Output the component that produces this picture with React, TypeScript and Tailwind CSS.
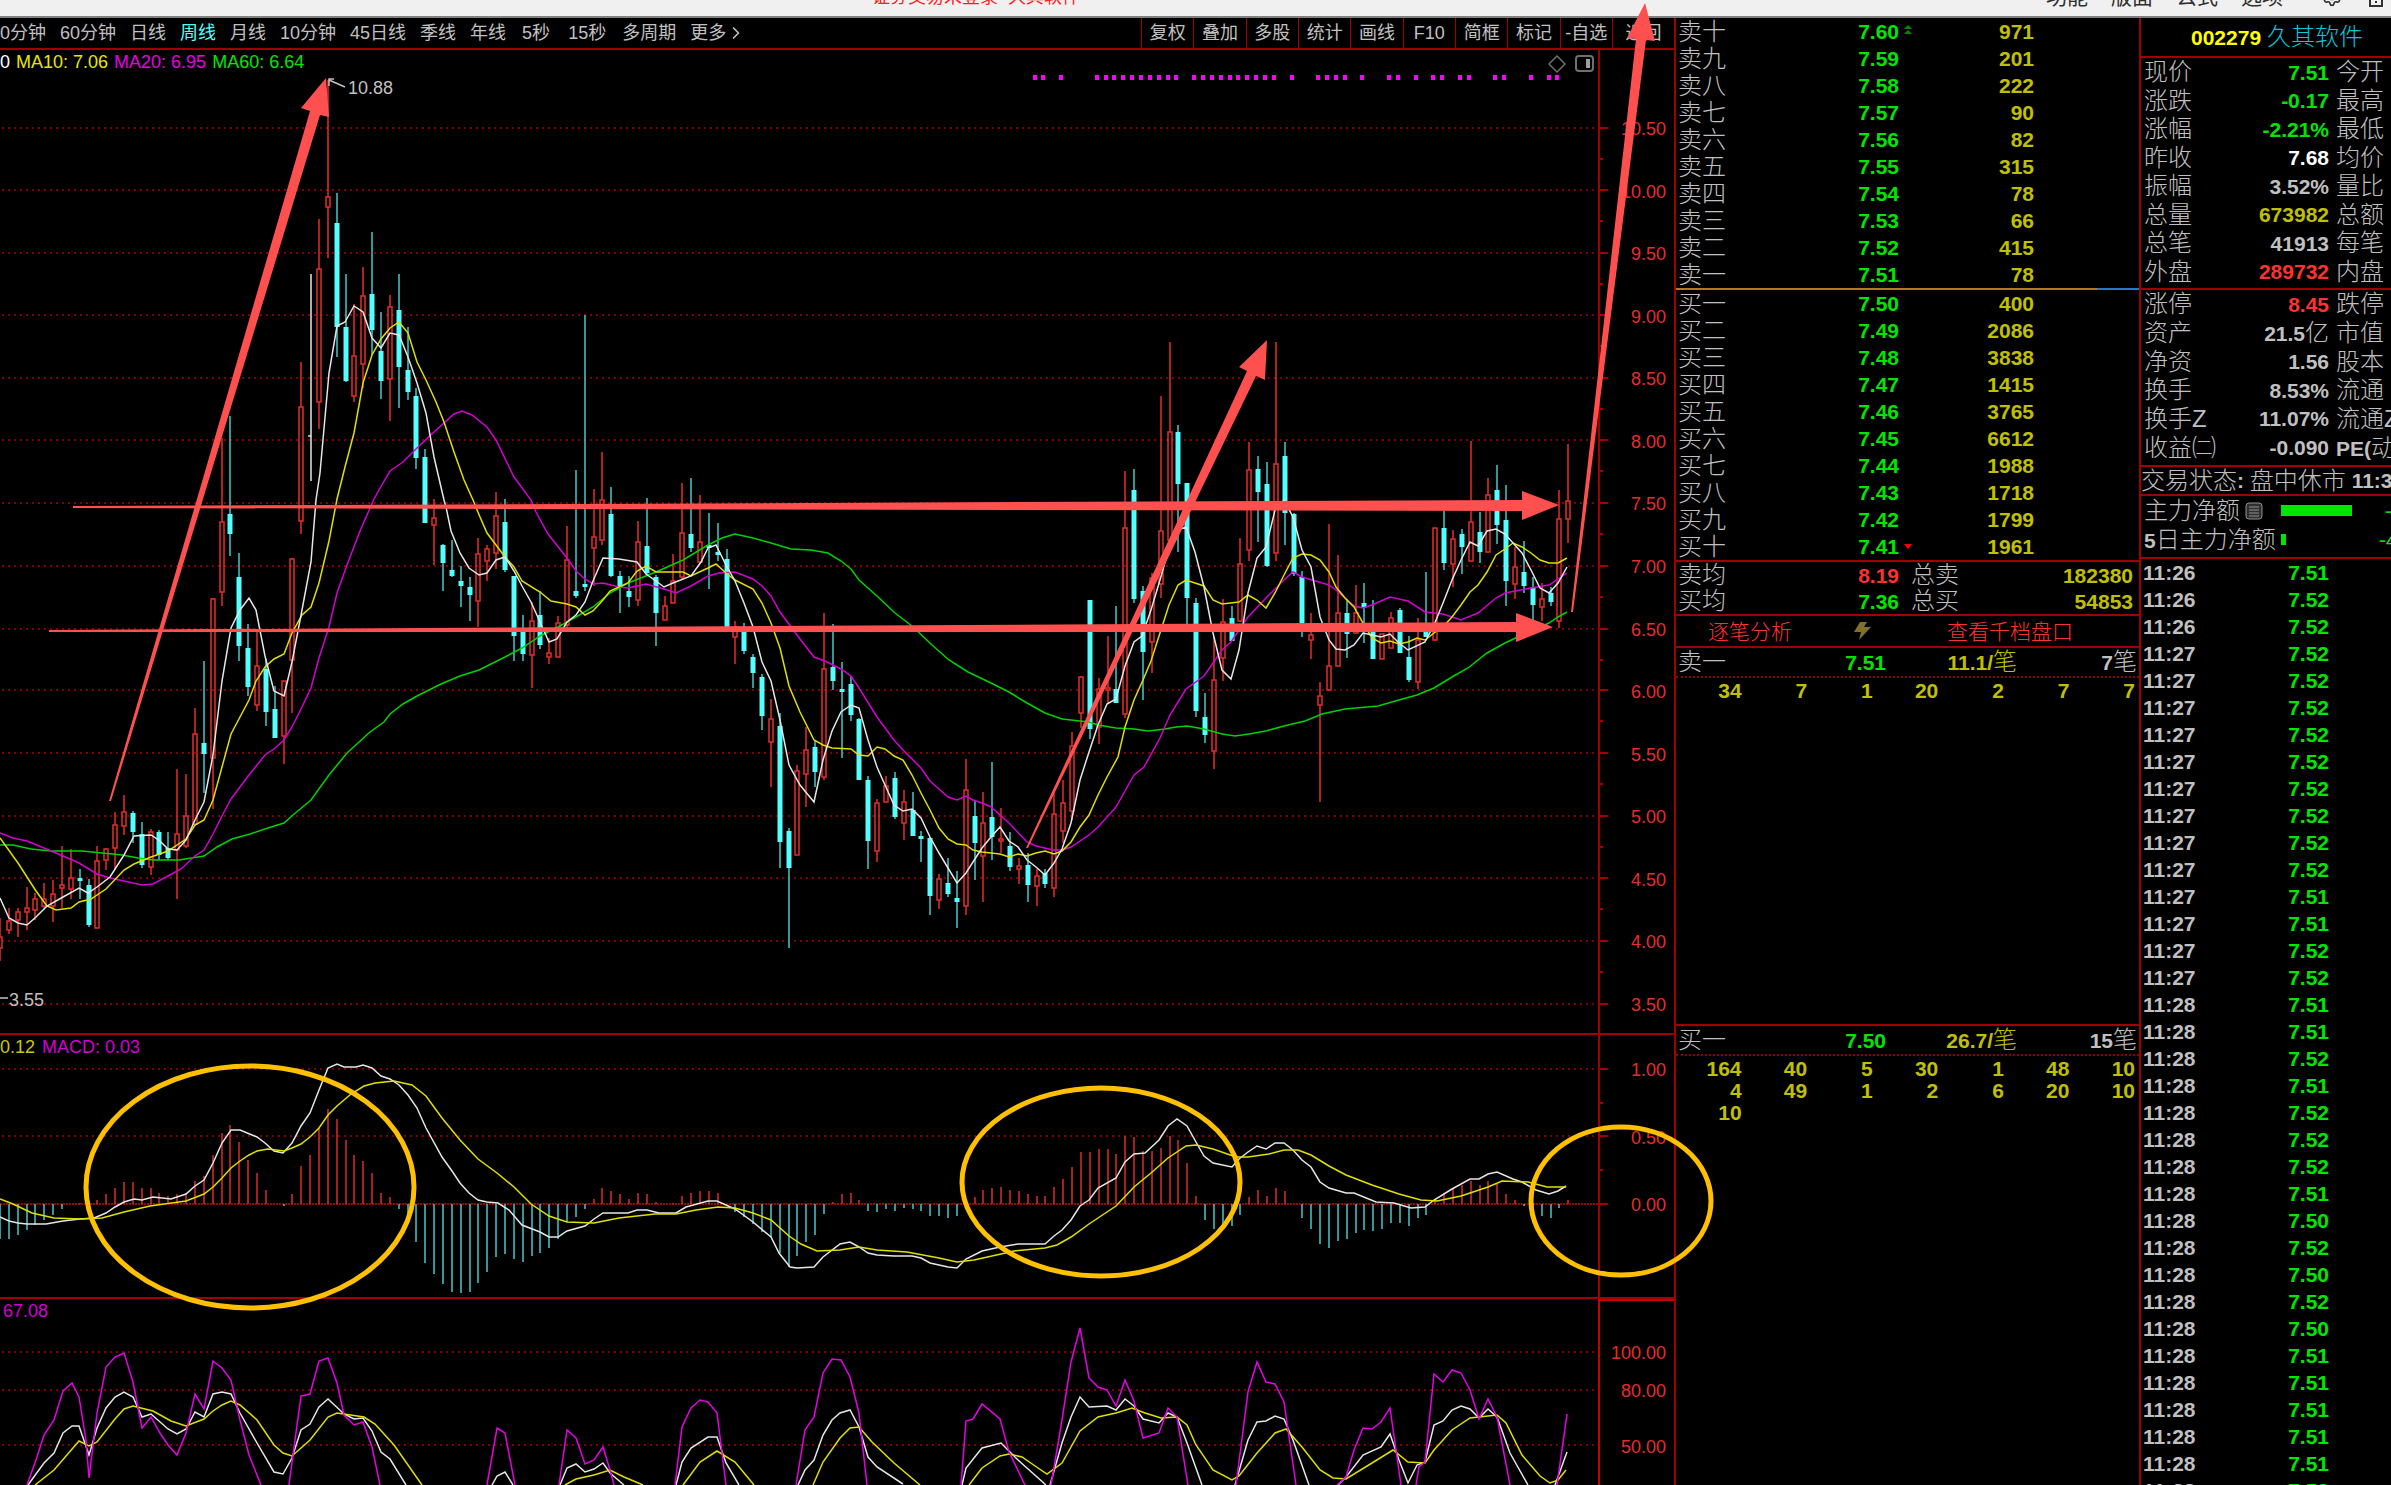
import { ChevronRight, Settings } from "lucide-react";

type Candle = [high: number, top: number, bottom: number, low: number];

// horizontal distance between two bars
const STEP = 8.86;

const RISE: Record<number, Candle> = {
  0: [918, 937, 948, 961],
  1: [908, 921, 930, 934],
  2: [908, 912, 920, 937],
  3: [887, 908, 912, 930],
  4: [893, 899, 910, 920],
  5: [883, 899, 906, 908],
  6: [880, 894, 906, 922],
  7: [846, 885, 888, 908],
  8: [849, 878, 889, 899],
  11: [846, 861, 928, 928],
  12: [848, 849, 860, 870],
  13: [812, 825, 848, 870],
  14: [795, 812, 826, 835],
  17: [829, 832, 867, 875],
  20: [769, 834, 850, 899],
  21: [774, 816, 846, 848],
  22: [708, 734, 824, 826],
  24: [598, 599, 758, 809],
  25: [438, 522, 592, 606],
  29: [631, 666, 705, 711],
  32: [681, 681, 736, 764],
  33: [558, 559, 660, 713],
  34: [362, 407, 521, 534],
  36: [219, 269, 402, 429],
  37: [80, 197, 207, 258],
  40: [304, 356, 396, 402],
  41: [267, 296, 364, 388],
  44: [295, 307, 379, 421],
  49: [499, 518, 525, 565],
  54: [538, 554, 601, 627],
  55: [545, 549, 561, 581],
  56: [492, 516, 553, 569],
  60: [602, 621, 655, 688],
  62: [638, 653, 657, 664],
  63: [616, 623, 657, 657],
  64: [526, 560, 625, 627],
  67: [489, 537, 548, 586],
  68: [452, 500, 540, 545],
  72: [521, 542, 600, 606],
  75: [596, 606, 620, 620],
  76: [554, 581, 603, 603],
  77: [483, 533, 577, 579],
  79: [495, 542, 562, 562],
  83: [621, 627, 637, 664],
  87: [699, 719, 742, 787],
  90: [765, 771, 855, 855],
  91: [727, 750, 774, 807],
  93: [613, 669, 777, 780],
  99: [799, 803, 851, 862],
  100: [776, 786, 802, 802],
  102: [790, 802, 823, 840],
  106: [874, 879, 900, 909],
  109: [759, 790, 906, 915],
  111: [792, 823, 856, 902],
  113: [808, 839, 841, 853],
  115: [858, 866, 869, 884],
  117: [869, 876, 886, 906],
  119: [793, 814, 888, 897],
  120: [780, 803, 831, 843],
  121: [732, 746, 811, 820],
  122: [676, 677, 713, 728],
  124: [678, 689, 727, 744],
  125: [636, 688, 690, 703],
  127: [471, 528, 714, 718],
  130: [573, 578, 642, 673],
  131: [396, 531, 584, 598],
  132: [342, 432, 540, 543],
  137: [637, 680, 751, 769],
  138: [599, 622, 658, 681],
  140: [538, 564, 621, 622],
  141: [442, 470, 550, 561],
  144: [342, 464, 553, 561],
  148: [613, 635, 640, 659],
  149: [682, 696, 705, 802],
  150: [524, 666, 690, 690],
  151: [555, 613, 666, 666],
  153: [585, 613, 633, 633],
  156: [634, 634, 659, 659],
  157: [612, 618, 648, 648],
  160: [618, 640, 682, 689],
  162: [528, 528, 640, 641],
  164: [530, 539, 564, 587],
  166: [441, 522, 561, 561],
  168: [478, 495, 552, 552],
  171: [547, 567, 584, 599],
  174: [583, 599, 607, 621],
  176: [490, 519, 621, 628],
  177: [444, 501, 519, 543],
};

const FALL: Record<number, Candle> = {
  9: [869, 878, 880, 899],
  10: [879, 885, 925, 927],
  15: [811, 813, 832, 843],
  16: [822, 834, 865, 868],
  18: [830, 832, 855, 860],
  19: [832, 848, 858, 860],
  23: [661, 743, 754, 793],
  26: [416, 514, 534, 556],
  27: [553, 577, 646, 661],
  28: [624, 648, 687, 696],
  30: [659, 669, 712, 726],
  31: [686, 709, 738, 738],
  38: [193, 223, 327, 357],
  39: [274, 327, 381, 382],
  42: [232, 294, 330, 355],
  43: [312, 351, 381, 399],
  45: [274, 310, 367, 408],
  46: [327, 370, 392, 400],
  47: [388, 396, 458, 469],
  48: [449, 457, 523, 523],
  50: [544, 545, 563, 591],
  51: [540, 570, 576, 577],
  52: [566, 581, 586, 607],
  53: [577, 587, 595, 621],
  57: [499, 522, 570, 572],
  58: [576, 576, 636, 661],
  59: [615, 629, 654, 661],
  61: [591, 615, 645, 649],
  65: [470, 591, 596, 598],
  66: [315, 584, 586, 591],
  69: [487, 514, 576, 577],
  70: [571, 576, 588, 613],
  71: [576, 591, 597, 607],
  73: [498, 546, 573, 574],
  74: [575, 577, 613, 646],
  78: [478, 534, 548, 552],
  80: [513, 545, 547, 589],
  81: [523, 552, 555, 561],
  82: [549, 559, 627, 627],
  84: [623, 631, 651, 654],
  85: [654, 657, 673, 688],
  86: [674, 677, 716, 730],
  88: [713, 726, 842, 868],
  89: [828, 831, 868, 948],
  92: [740, 747, 772, 787],
  94: [624, 667, 681, 690],
  95: [662, 689, 691, 758],
  96: [676, 684, 715, 721],
  97: [718, 719, 780, 780],
  98: [776, 780, 841, 869],
  101: [772, 778, 817, 819],
  103: [792, 810, 836, 836],
  104: [831, 836, 838, 862],
  105: [837, 838, 896, 915],
  107: [858, 883, 894, 897],
  108: [871, 898, 902, 928],
  110: [800, 816, 843, 880],
  112: [762, 817, 837, 860],
  114: [832, 846, 867, 871],
  116: [853, 865, 885, 902],
  118: [869, 873, 884, 888],
  123: [600, 600, 729, 739],
  126: [606, 689, 703, 703],
  128: [469, 490, 599, 603],
  129: [586, 591, 652, 700],
  133: [425, 432, 484, 552],
  134: [483, 483, 598, 625],
  135: [598, 603, 711, 717],
  136: [693, 717, 735, 743],
  139: [606, 618, 641, 641],
  142: [456, 469, 492, 542],
  143: [462, 484, 566, 567],
  145: [442, 456, 513, 545],
  146: [513, 514, 574, 576],
  147: [571, 577, 623, 637],
  152: [599, 613, 634, 658],
  154: [583, 603, 608, 643],
  155: [600, 628, 659, 659],
  158: [608, 610, 653, 653],
  159: [636, 657, 680, 682],
  161: [572, 630, 637, 637],
  163: [511, 528, 563, 570],
  165: [529, 534, 547, 574],
  167: [512, 532, 552, 563],
  169: [465, 490, 525, 544],
  170: [485, 520, 581, 606],
  172: [541, 572, 586, 593],
  173: [577, 587, 605, 620],
  175: [587, 593, 602, 606],
};

const MA5 =
  "0,898 9,918 18,923 27,925 36,917 47,906 63,897 79,888 88,893 97,887 110,877 124,855 134,836 151,835 160,841 168,849 177,850 186,840 195,820 204,802 213,755 222,681 231,628 240,610 249,598 256,610 265,656 274,691 284,696 292,662 302,610 311,562 316,500 320,473 329,373 337,326 345,322 354,306 363,312 372,338 381,348 390,333 399,335 408,357 417,383 426,413 434,457 444,500 446,507 451,531 460,553 469,568 479,575 487,573 496,560 505,557 514,571 522,586 531,602 540,622 549,642 557,639 567,622 576,615 585,602 593,581 603,558 619,559 637,562 646,574 656,581 664,587 673,583 691,576 701,562 708,548 716,545 726,565 735,581 744,603 753,627 762,662 771,681 780,720 789,765 800,785 814,802 823,760 832,731 841,712 851,705 859,708 868,740 877,767 885,785 894,805 903,811 912,809 921,818 930,837 939,853 948,868 957,883 966,873 973,862 982,848 991,837 1000,827 1009,841 1018,847 1027,860 1036,867 1045,875 1054,863 1062,849 1071,823 1080,780 1089,752 1098,725 1107,704 1116,699 1125,666 1134,642 1142,636 1151,610 1160,580 1169,548 1178,530 1186,527 1195,552 1204,587 1213,633 1222,670 1231,679 1239,650 1248,593 1257,558 1266,547 1275,510 1284,500 1293,517 1302,550 1311,567 1320,617 1329,640 1336,649 1345,650 1354,645 1363,633 1372,635 1381,637 1390,634 1399,643 1408,650 1425,642 1434,625 1443,603 1452,580 1461,560 1470,542 1478,546 1487,531 1496,529 1505,534 1513,543 1522,553 1531,570 1540,588 1549,593 1558,583 1567,567";

const MA10 =
  "0,838 18,863 36,891 47,906 56,910 71,908 79,902 91,899 106,889 124,870 134,864 151,857 168,851 186,839 195,825 204,820 213,800 222,767 231,734 240,717 249,700 256,681 265,667 274,659 284,654 292,633 302,615 311,607 319,583 329,541 337,499 345,467 354,433 363,383 372,355 381,339 390,328 399,322 408,333 417,362 426,380 436,402 444,422 454,452 464,480 473,500 480,517 487,533 496,545 505,557 514,567 522,581 540,592 551,601 567,604 576,607 585,615 593,611 603,600 610,591 628,583 637,571 646,566 656,572 683,572 691,576 708,568 716,564 726,573 735,580 753,589 762,603 771,623 780,648 789,686 800,712 814,740 823,745 832,748 851,749 859,755 868,756 877,747 885,749 894,756 903,760 912,775 921,793 930,810 939,828 948,839 957,844 966,845 973,850 982,852 991,853 1000,854 1009,857 1018,854 1027,856 1036,853 1045,851 1054,854 1062,851 1071,842 1080,827 1089,815 1098,795 1107,777 1118,757 1125,727 1134,700 1143,680 1151,661 1160,633 1169,605 1178,585 1186,580 1195,583 1204,586 1213,600 1222,604 1239,602 1248,595 1257,600 1266,608 1275,593 1284,575 1293,558 1302,554 1311,555 1320,560 1329,572 1336,587 1345,598 1354,607 1363,623 1372,638 1381,643 1390,641 1399,644 1408,642 1417,638 1425,640 1434,633 1443,627 1452,617 1461,605 1470,592 1478,585 1487,572 1496,555 1505,549 1513,543 1522,547 1531,553 1540,560 1549,563 1558,563 1567,558";

const MA20 =
  "0,833 13,838 27,841 44,848 63,856 79,863 97,874 110,878 124,881 142,885 153,884 168,876 181,869 195,856 204,850 213,834 222,816 231,799 249,775 265,755 274,749 284,740 292,727 302,707 311,688 319,658 329,627 337,593 347,565 360,531 374,499 383,483 390,471 403,462 417,448 434,432 444,423 454,414 462,411 472,415 487,427 496,440 514,477 531,500 536,512 548,534 567,558 576,571 585,579 593,584 603,583 619,587 628,588 646,584 664,589 676,593 691,586 708,576 719,573 735,572 753,579 762,586 771,596 780,612 800,639 814,657 825,661 841,669 851,676 859,688 877,717 894,740 903,750 921,768 930,781 948,797 957,800 966,796 973,800 982,803 991,807 1009,823 1027,842 1036,846 1053,850 1062,850 1071,847 1089,835 1098,827 1116,807 1125,791 1134,775 1144,767 1160,738 1170,715 1178,702 1186,689 1204,676 1213,663 1222,650 1231,642 1248,617 1266,598 1284,580 1293,572 1302,577 1329,585 1336,590 1354,606 1363,608 1372,605 1390,597 1408,601 1425,612 1443,614 1461,620 1478,613 1496,598 1505,593 1531,588 1549,585 1567,573";

const MA60 =
  "0,845 13,845 31,849 51,851 82,851 102,853 122,855 138,858 153,860 179,860 204,856 217,847 232,839 250,834 268,828 284,823 293,815 311,800 329,775 347,753 370,732 384,722 390,714 403,704 417,696 441,684 460,676 479,670 505,657 522,648 540,636 558,627 576,617 593,607 610,593 628,583 656,572 683,560 708,545 722,538 735,534 753,538 771,543 791,549 811,550 828,553 841,561 851,569 859,580 877,596 895,613 912,626 932,645 949,660 968,672 991,683 1009,692 1027,703 1045,713 1062,719 1080,721 1089,722 1098,725 1116,728 1134,729 1148,731 1165,729 1176,727 1187,726 1204,729 1222,734 1235,736 1249,734 1266,731 1284,726 1305,721 1322,714 1345,709 1378,706 1399,700 1417,695 1434,688 1452,677 1468,668 1487,653 1505,643 1522,635 1549,623 1558,617 1567,612";

const MACD_BARS = [
  -35, -35, -31, -26, -21, -16, -11, -5, 0, 1, 0, 4, 10, 16, 22, 22, 16, 16, 11, 8, 10, 11, 23, 28, 49, 71, 79, 62, 44,
  31, 14, 0, -2, 10, 38, 49, 76, 95, 85, 64, 49, 43, 31, 11, 7, -5, -17, -38, -59, -70, -80, -88, -89, -88, -79, -68,
  -53, -50, -55, -58, -52, -49, -44, -35, -18, -13, -5, 5, 16, 13, 10, 5, 11, 10, 2, 0, 1, 8, 11, 13, 13, 11, 0, -8,
  -13, -20, -28, -33, -49, -63, -52, -38, -31, -10, 2, 10, 11, 4, -7, -8, -5, -7, -4, -5, -7, -12, -12, -14, -12, 0, 7,
  14, 16, 17, 14, 13, 10, 8, 8, 17, 25, 37, 52, 52, 55, 55, 50, 68, 67, 53, 53, 56, 68, 64, 41, 8, -16, -25, -22, -22,
  -11, 7, 14, 8, 16, 13, 0, -14, -25, -40, -44, -37, -35, -29, -26, -27, -25, -19, -19, -22, -14, -11, 5, 11, 16, 19,
  23, 19, 23, 20, 10, 4, -2, -4, -12, -14, -4, 4,
];

const DIF =
  "0,1217 9,1221 18,1223 27,1224 46,1224 63,1221 80,1219 94,1218 106,1213 115,1207 124,1202 134,1199 142,1200 153,1197 171,1199 186,1194 195,1186 204,1180 213,1163 222,1143 231,1130 240,1130 257,1137 265,1143 274,1151 283,1153 292,1143 301,1126 310,1113 319,1090 328,1068 337,1064 344,1067 356,1067 363,1065 372,1068 381,1076 390,1079 399,1085 408,1095 417,1108 426,1128 442,1157 452,1171 460,1183 469,1193 478,1200 487,1202 498,1203 509,1210 522,1225 540,1232 549,1237 558,1237 567,1231 585,1226 594,1219 603,1213 628,1213 637,1210 647,1210 659,1213 676,1213 686,1207 708,1201 717,1201 735,1209 753,1222 771,1237 779,1253 790,1267 797,1268 814,1267 823,1257 840,1244 850,1242 859,1247 868,1253 877,1255 894,1256 912,1256 921,1258 930,1263 948,1267 957,1268 966,1259 982,1251 1000,1247 1018,1244 1045,1244 1054,1236 1062,1230 1071,1220 1080,1206 1089,1200 1098,1188 1116,1178 1125,1162 1134,1154 1145,1153 1159,1140 1168,1126 1177,1119 1187,1126 1196,1142 1204,1156 1213,1163 1232,1167 1239,1159 1248,1152 1257,1146 1266,1149 1275,1143 1284,1143 1293,1150 1302,1160 1311,1167 1320,1182 1329,1188 1346,1193 1354,1193 1376,1202 1394,1203 1411,1208 1425,1207 1434,1200 1452,1189 1470,1179 1479,1179 1488,1174 1497,1172 1513,1179 1522,1182 1536,1190 1549,1194 1558,1191 1566,1186";

const DEA =
  "0,1199 13,1204 32,1213 54,1218 80,1219 102,1218 124,1212 150,1206 186,1201 204,1194 213,1187 222,1178 231,1168 240,1161 249,1155 257,1151 268,1149 284,1151 292,1148 301,1144 310,1137 319,1128 328,1115 337,1106 351,1094 364,1086 375,1083 394,1081 412,1085 426,1096 442,1118 460,1140 478,1159 497,1173 514,1187 531,1204 549,1216 567,1222 594,1223 619,1218 655,1214 676,1214 696,1210 718,1207 735,1208 753,1213 771,1220 789,1236 801,1244 817,1251 840,1250 859,1247 877,1250 907,1252 939,1258 957,1262 974,1260 1001,1254 1014,1251 1045,1248 1057,1245 1071,1237 1089,1224 1107,1212 1116,1206 1134,1187 1151,1173 1168,1158 1186,1146 1196,1145 1213,1149 1236,1157 1248,1157 1269,1154 1284,1150 1298,1150 1311,1155 1329,1166 1346,1175 1372,1185 1399,1194 1421,1200 1437,1201 1461,1196 1488,1187 1502,1181 1528,1182 1547,1187 1566,1187";

const LINE_J = [
  "27,1485 36,1460 44,1435 54,1420 63,1391 72,1383 79,1397 86,1440 89,1478 97,1413 106,1367 115,1357 124,1353 133,1382 142,1428 151,1417 160,1433 168,1445 177,1455 186,1433 195,1394 204,1409 213,1361 222,1368 231,1380 240,1420 249,1455 261,1485",
  "289,1485 295,1440 301,1396 310,1394 319,1361 328,1358 337,1383 344,1415 354,1425 363,1422 372,1447 380,1485",
  "487,1485 497,1428 505,1433 515,1485",
  "559,1485 567,1430 576,1438 585,1464 594,1460 603,1447 610,1470 614,1485",
  "675,1485 682,1427 691,1408 700,1400 708,1402 717,1413 726,1485",
  "796,1485 805,1430 814,1417 823,1373 832,1359 841,1360 850,1377 859,1413 867,1485",
  "961,1485 966,1421 973,1419 982,1404 1000,1419 1009,1452 1025,1485",
  "1051,1485 1062,1420 1071,1362 1080,1328 1089,1378 1098,1387 1107,1390 1116,1406 1125,1380 1134,1401 1143,1438 1159,1433 1168,1408 1177,1417 1188,1485",
  "1236,1485 1248,1392 1257,1362 1266,1382 1275,1384 1284,1402 1296,1485",
  "1337,1485 1346,1477 1354,1450 1363,1428 1372,1429 1381,1422 1390,1408 1401,1485",
  "1416,1485 1419,1467 1425,1462 1434,1374 1443,1382 1452,1370 1461,1373 1470,1390 1479,1419 1488,1399 1497,1417 1510,1485",
  "1557,1485 1567,1414",
];

const LINE_K = [
  "28,1485 44,1463 54,1453 63,1433 72,1426 79,1426 89,1455 97,1428 106,1408 115,1397 124,1392 133,1397 142,1417 151,1414 168,1429 177,1434 186,1429 195,1412 204,1417 213,1394 222,1392 231,1394 240,1413 257,1443 274,1472 283,1474 292,1458 301,1430 310,1424 319,1407 328,1399 344,1414 354,1419 363,1418 372,1431 381,1452 390,1459 406,1485",
  "492,1485 497,1476 505,1472 513,1485",
  "560,1485 567,1468 576,1464 585,1472 594,1469 603,1463 610,1473 624,1485",
  "676,1485 682,1462 691,1448 708,1437 717,1437 726,1463 739,1485",
  "798,1485 805,1470 814,1460 823,1435 832,1420 840,1413 850,1410 859,1427 868,1457 877,1467 903,1484",
  "962,1485 966,1468 982,1448 1001,1443 1018,1460 1046,1485",
  "1050,1485 1062,1443 1071,1417 1080,1397 1089,1407 1107,1406 1116,1410 1125,1399 1134,1406 1143,1419 1159,1423 1168,1413 1177,1417 1187,1443 1202,1485",
  "1235,1485 1248,1440 1257,1422 1266,1421 1275,1416 1284,1419 1293,1440 1309,1485",
  "1338,1485 1346,1477 1363,1455 1381,1447 1390,1434 1399,1460 1408,1483 1417,1465 1425,1462 1434,1425 1443,1421 1452,1410 1461,1406 1470,1409 1479,1418 1488,1409 1497,1417 1510,1453 1528,1485",
  "1555,1485 1567,1452",
];

const LINE_D = [
  "35,1485 54,1470 79,1441 89,1446 97,1442 115,1419 124,1409 133,1406 153,1411 171,1421 186,1426 204,1419 213,1411 222,1405 231,1401 240,1405 257,1420 274,1445 283,1453 292,1456 310,1440 328,1417 337,1413 364,1417 375,1424 394,1445 422,1485",
  "565,1485 576,1479 594,1475 610,1470 624,1477 643,1485",
  "683,1485 700,1462 717,1451 735,1462 754,1485",
  "813,1485 823,1462 840,1438 850,1428 859,1427 872,1442 894,1463 920,1485",
  "969,1485 982,1468 1000,1456 1009,1454 1022,1457 1038,1468 1047,1474 1062,1463 1071,1447 1080,1431 1098,1417 1116,1413 1132,1408 1145,1413 1161,1418 1177,1417 1187,1425 1196,1445 1213,1470 1232,1480 1239,1476 1257,1453 1275,1433 1286,1429 1302,1447 1320,1470 1333,1478 1346,1479 1372,1463 1393,1450 1408,1462 1425,1463 1434,1450 1452,1430 1470,1418 1497,1415 1506,1423 1522,1455 1540,1476 1550,1483 1558,1480 1566,1470",
];

const SIGNALS = [
  117, 118, 120, 124, 125, 126, 127, 128, 129, 130, 131, 132, 133, 135, 136, 137, 138, 139, 140, 141, 142, 143, 144,
  146, 149, 150, 151, 152, 154, 157, 158, 160, 162, 163, 165, 166, 169, 170, 173, 175, 176,
];

const PRICE_LINES = [128, 190, 253, 315, 378, 440, 503, 566, 629, 690, 753, 816, 878, 941, 1004];
const PRICE_LABELS = [
  "10.50", "10.00", "9.50", "9.00", "8.50", "8.00", "7.50", "7.00", "6.50", "6.00", "5.50", "5.00", "4.50", "4.00",
  "3.50",
];

const PERIODS = [
  "0分钟", "60分钟", "日线", "周线", "月线", "10分钟", "45日线", "季线", "年线", "5秒", "15秒", "多周期",
];
const TOOLS = ["复权", "叠加", "多股", "统计", "画线", "F10", "简框", "标记", "-自选"];

const ASKS = [
  ["卖十", "7.60", "971"],
  ["卖九", "7.59", "201"],
  ["卖八", "7.58", "222"],
  ["卖七", "7.57", "90"],
  ["卖六", "7.56", "82"],
  ["卖五", "7.55", "315"],
  ["卖四", "7.54", "78"],
  ["卖三", "7.53", "66"],
  ["卖二", "7.52", "415"],
  ["卖一", "7.51", "78"],
];
const BIDS = [
  ["买一", "7.50", "400"],
  ["买二", "7.49", "2086"],
  ["买三", "7.48", "3838"],
  ["买四", "7.47", "1415"],
  ["买五", "7.46", "3765"],
  ["买六", "7.45", "6612"],
  ["买七", "7.44", "1988"],
  ["买八", "7.43", "1718"],
  ["买九", "7.42", "1799"],
  ["买十", "7.41", "1961"],
];

const GREEN = "text-[#00e600]";
const RED = "text-[#ff3232]";
const GRAY = "text-[#c0c0c0]";
const YELLOW = "text-[#c0c000]";

const QUOTES = [
  ["现价", "7.51", "今开", GREEN],
  ["涨跌", "-0.17", "最高", GREEN],
  ["涨幅", "-2.21%", "最低", GREEN],
  ["昨收", "7.68", "均价", "text-white"],
  ["振幅", "3.52%", "量比", GRAY],
  ["总量", "673982", "总额", YELLOW],
  ["总笔", "41913", "每笔", GRAY],
  ["外盘", "289732", "内盘", RED],
];
const FUNDAMENTALS = [
  ["涨停", "8.45", "跌停", RED],
  ["资产", "21.5亿", "市值", GRAY],
  ["净资", "1.56", "股本", GRAY],
  ["换手", "8.53%", "流通", GRAY],
  ["换手Z", "11.07%", "流通Z", GRAY],
  ["收益㈡", "-0.090", "PE(动)", GRAY],
];

const TICKS = [
  ["11:26", "7.51"], ["11:26", "7.52"], ["11:26", "7.52"], ["11:27", "7.52"], ["11:27", "7.52"], ["11:27", "7.52"],
  ["11:27", "7.52"], ["11:27", "7.52"], ["11:27", "7.52"], ["11:27", "7.52"], ["11:27", "7.52"], ["11:27", "7.52"],
  ["11:27", "7.51"], ["11:27", "7.51"], ["11:27", "7.52"], ["11:27", "7.52"], ["11:28", "7.51"], ["11:28", "7.51"],
  ["11:28", "7.52"], ["11:28", "7.51"], ["11:28", "7.52"], ["11:28", "7.52"], ["11:28", "7.52"], ["11:28", "7.51"],
  ["11:28", "7.50"], ["11:28", "7.52"], ["11:28", "7.50"], ["11:28", "7.52"], ["11:28", "7.50"], ["11:28", "7.51"],
  ["11:28", "7.51"], ["11:28", "7.51"], ["11:28", "7.51"], ["11:28", "7.51"], ["11:28", "7.52"],
];

function GridLine({ y }: { y: number }) {
  return <line x1="2" x2="1596" y1={y} y2={y} stroke="#800000" strokeWidth="2" strokeDasharray="2 4" />;
}

function Line({ points, color }: { points: string; color: string }) {
  return <polyline points={points} fill="none" stroke={color} strokeWidth="1.5" />;
}

function PriceChart() {
  return (
    <svg
      className="block h-full w-full"
      viewBox="0 50 1598 983"
      preserveAspectRatio="none"
      role="img"
      aria-label="周线K线图"
    >
      {PRICE_LINES.map((y) => (
        <GridLine key={y} y={y} />
      ))}
      {SIGNALS.map((i) => (
        <rect key={i} x={Math.round(i * STEP - 4)} y="75" width="4" height="5" fill="#ff00ff" />
      ))}
      {Object.entries(RISE).map(([key, [high, top, bottom, low]]) => {
        const x = Math.round(Number(key) * STEP);
        return (
          <g key={key} stroke="#e62d2d" fill="none">
            <path d={`M${x} ${high}V${top}M${x} ${bottom}V${low}`} strokeWidth="1.5" />
            <rect x={x - 2} y={top} width="4" height={Math.max(bottom - top, 2)} strokeWidth="1.5" />
          </g>
        );
      })}
      {Object.entries(FALL).map(([key, [high, top, bottom, low]]) => {
        const x = Math.round(Number(key) * STEP);
        return (
          <g key={key}>
            <path d={`M${x} ${high}V${low}`} stroke="#46c8c8" strokeWidth="1.5" />
            <rect x={x - 2.5} y={top} width="5" height={Math.max(bottom - top, 3)} fill="#54ffff" />
          </g>
        );
      })}
      <path d="M311 274V481M308 436H311" stroke="#e6e6e6" strokeWidth="1.5" />
      <Line points={MA60} color="#00d200" />
      <Line points={MA20} color="#d200d2" />
      <Line points={MA10} color="#e0e000" />
      <Line points={MA5} color="#e6e6e6" />
      <path d="M345 87L329 80M329 86V79H334" fill="none" stroke="#c0c0c0" strokeWidth="1.5" />
      <path d="M0 998H8" stroke="#c0c0c0" strokeWidth="1.5" />
      {/* pane icons */}
      <path d="M1557 56L1565 64L1557 72L1549 64Z" fill="none" stroke="#707070" strokeWidth="1.5" />
      <rect x="1576" y="56" width="17" height="15" rx="3" fill="none" stroke="#707070" strokeWidth="2" />
      <rect x="1586" y="59" width="4" height="9" fill="#a0a0a0" />
    </svg>
  );
}

function MacdChart() {
  return (
    <svg
      className="block h-full w-full"
      viewBox="0 1035 1598 262"
      preserveAspectRatio="none"
      role="img"
      aria-label="MACD"
    >
      <GridLine y={1069} />
      <GridLine y={1136} />
      <line x1="0" x2="1598" y1="1204" y2="1204" stroke="#a00000" strokeWidth="2" strokeDasharray="2 1" />
      {MACD_BARS.map((v, i) => {
        const x = Math.round(i * STEP);
        return v === 0 ? null : (
          <path key={i} d={`M${x} 1204v${-v}`} stroke={v > 0 ? "#dc2d2d" : "#46c8c8"} strokeWidth="1.5" />
        );
      })}
      <Line points={DIF} color="#e6e6e6" />
      <Line points={DEA} color="#e0e000" />
    </svg>
  );
}

function KdjChart() {
  return (
    <svg
      className="block h-full w-full"
      viewBox="0 1299 1598 186"
      preserveAspectRatio="none"
      role="img"
      aria-label="KDJ"
    >
      <GridLine y={1352} />
      <GridLine y={1390} />
      <GridLine y={1445} />
      {LINE_K.map((p) => (
        <Line key={p} points={p} color="#e6e6e6" />
      ))}
      {LINE_D.map((p) => (
        <Line key={p} points={p} color="#e0e000" />
      ))}
      {LINE_J.map((p) => (
        <Line key={p} points={p} color="#e600e6" />
      ))}
    </svg>
  );
}

function BookTable({ rows, mark }: { rows: string[][]; mark: "up" | "down" }) {
  const markRow = mark === "up" ? 0 : rows.length - 1;
  return (
    <table className="w-full table-fixed border-collapse text-[21px] leading-none">
      <colgroup>
        <col className="w-[100px]" />
        <col className="w-[123px]" />
        <col className="w-[135px]" />
        <col />
      </colgroup>
      <tbody>
        {rows.map(([label, price, volume], i) => (
          <tr key={label} className="h-[27px]">
            <th scope="row" className="p-0 pl-[2px] text-left text-2xl leading-none font-light text-[#c0c0c0]">
              {label}
            </th>
            <td className="p-0 text-right font-bold text-[#00e600]">{price}</td>
            <td className="relative p-0 text-right font-bold text-[#c0c000]">
              {i === markRow && mark === "up" && (
                <svg className="absolute top-[7px] left-[5px] h-[10px] w-[8px]" viewBox="0 0 8 10" fill="#008c00">
                  <path d="M4 0L8 4H0ZM4 5L8 9H0Z" />
                </svg>
              )}
              {i === markRow && mark === "down" && (
                <svg className="absolute top-[11px] left-[5px] h-[5px] w-[8px]" viewBox="0 0 8 5" fill="#ff0000">
                  <path d="M0 0H8L4 5Z" />
                </svg>
              )}
              {volume}
            </td>
            <td />
          </tr>
        ))}
      </tbody>
    </table>
  );
}

type QueueProps = { label: string; price: string; average: string; count: string; lots: string[] };

function OrderQueue({ label, price, average, count, lots }: QueueProps) {
  return (
    <section>
      <div className="flex h-[30px] items-center border-b-2 border-dotted border-[#8c0000] pr-[2px] pl-[2px] text-[21px] leading-none font-bold">
        <span className="w-[86px] text-2xl leading-none font-light text-[#c0c0c0]">{label}</span>
        <span className="w-[122px] text-right text-[#00e600]">{price}</span>
        <span className="w-[131px] text-right text-[#c0c000]">
          {average}/<span className="text-2xl leading-none font-light">笔</span>
        </span>
        <span className="flex-1 text-right text-[#c0c0c0]">
          {count}
          <span className="text-2xl leading-none font-light">笔</span>
        </span>
      </div>
      <div className="grid grid-cols-7 pt-[2px] pr-1 text-right text-[21px] leading-[22px] font-bold text-[#c0c000]">
        {lots.map((n, i) => (
          <span key={i}>{n}</span>
        ))}
      </div>
    </section>
  );
}

function QuoteTable({ rows, height }: { rows: string[][]; height: string }) {
  return (
    <table className={`w-[270px] table-fixed border-collapse text-[21px] leading-none whitespace-nowrap ${height}`}>
      <colgroup>
        <col className="w-[76px]" />
        <col className="w-[112px]" />
        <col className="w-[82px]" />
      </colgroup>
      <tbody>
        {rows.map(([label, value, next, color]) => (
          <tr key={label}>
            <th scope="row" className="p-0 pl-[3px] text-left text-2xl leading-none font-light text-[#c0c0c0]">
              {label}
            </th>
            <td className={`p-0 text-right font-bold ${color}`}>
              {value.replace("亿", "")}
              {value.endsWith("亿") && <span className="text-2xl leading-none font-light">亿</span>}
            </td>
            <th scope="row" className="p-0 pl-[7px] text-left text-2xl leading-none font-light text-[#c0c0c0]">
              {next.startsWith("PE") ? (
                <>
                  <span className="text-[21px] font-bold">PE(</span>动
                </>
              ) : (
                next
              )}
            </th>
          </tr>
        ))}
      </tbody>
    </table>
  );
}

/* hand-drawn arrows and circles lying over every pane */
function Annotations() {
  return (
    <svg
      className="pointer-events-none absolute inset-0 h-full w-full"
      viewBox="0 0 2391 1485"
      preserveAspectRatio="none"
      aria-hidden="true"
    >
      <g fill="#ff5050">
        <polygon points="109,801 310,111 301,108 326,78 329,117 320,115 111,801" />
        <polygon points="1026,848 1247,371 1239,367 1267,340 1265,380 1256,376 1028,848" />
        <polygon points="1571,612 1636,39 1627,38 1645,3 1655,41 1646,40 1573,612" />
        <polygon points="73,506 1522,500 1522,491 1559,505 1522,520 1522,511 73,508" />
        <polygon points="49,630 1516,622 1516,613 1553,627 1516,642 1516,632 49,632" />
      </g>
      <g fill="none" stroke="#ffc000" strokeWidth="5">
        <ellipse cx="250" cy="1187" rx="164" ry="121" />
        <ellipse cx="1101" cy="1182" rx="139" ry="94" />
        <ellipse cx="1621" cy="1201" rx="90" ry="74" />
      </g>
    </svg>
  );
}

export default function App() {
  return (
    <div className="relative flex h-screen flex-col overflow-hidden bg-black text-lg leading-none text-[#c0c0c0] [font-family:'Liberation_Sans','Noto_Sans_CJK_SC',sans-serif]">
      <header className="flex h-[18px] shrink-0 items-start overflow-hidden border-b-2 border-[#808080] bg-[#f0f0f0]">
        <h1 className="-mt-3 flex-1 pl-[872px] leading-[18px] text-[#ff1e1e]">证券交易未登录&nbsp; 久其软件</h1>
        <nav className="-mt-3.5 flex items-center gap-[23px] pr-2 text-[21px] leading-[21px] text-[#303030]">
          <button type="button">功能</button>
          <button type="button">版面</button>
          <button type="button">公式</button>
          <button type="button">选项</button>
          <button type="button" aria-label="设置" className="ml-4">
            <Settings size={20} />
          </button>
          <button type="button" aria-label="锁定" className="ml-1">
            <svg width="14" height="20" viewBox="0 0 14 20" fill="none" stroke="#303030" strokeWidth="2">
              <path d="M1 8H13V19H1ZM6 15H8" />
            </svg>
          </button>
        </nav>
      </header>

      <main className="flex min-h-0 flex-1">
        <div className="flex min-w-0 flex-1 flex-col">
          <div className="flex h-8 shrink-0 items-stretch justify-between border-b-2 border-[#a00000]">
            <div className="flex items-center gap-[14px] whitespace-nowrap">
              {PERIODS.map((p) => (
                <button
                  key={p}
                  type="button"
                  className={p === "周线" ? "text-[#54ffff]" : p.endsWith("秒") ? "px-[2px]" : "text-[#c0c0c0]"}
                >
                  {p}
                </button>
              ))}
              <button type="button" className="flex items-center">
                更多
                <ChevronRight size={20} strokeWidth={2} />
              </button>
            </div>
            <div className="flex">
              <div className="grid w-[471px] grid-cols-9">
                {TOOLS.map((t) => (
                  <button key={t} type="button" className="border-l border-[#a00000] whitespace-nowrap">
                    {t}
                  </button>
                ))}
              </div>
              <button type="button" className="w-[62px] border-l border-[#a00000]">
                返回
              </button>
            </div>
          </div>

          <section className="flex h-[985px] shrink-0 border-b-2 border-[#a00000]">
            <div className="relative min-w-0 flex-1">
              <PriceChart />
              <div className="absolute top-0 left-0 flex gap-[6px] leading-6">
                <span className="text-white">0</span>
                <span className="text-[#e6e600]">MA10: 7.06</span>
                <span className="text-[#e600e6]">MA20: 6.95</span>
                <span className="text-[#00e600]">MA60: 6.64</span>
              </div>
              <span className="absolute top-[29px] left-[348px]">10.88</span>
              <span className="absolute top-[941px] left-[9px]">3.55</span>
            </div>
            <div className="flex w-[76px] border-l-2 border-[#a00000]">
              <svg className="h-full w-2" viewBox="0 50 8 983" preserveAspectRatio="none" stroke="#a00000">
                {PRICE_LINES.map((y) => (
                  <path key={y} d={`M0 ${y}H8M0 ${y + 31}H3`} strokeWidth="2" />
                ))}
              </svg>
              <div className="flex h-[967px] flex-1 flex-col justify-between pt-[67px] pr-2 text-right leading-6 text-[#e62d2d]">
                {PRICE_LABELS.map((l) => (
                  <span key={l}>{l}</span>
                ))}
              </div>
            </div>
          </section>

          <section className="flex h-[264px] shrink-0 border-b-2 border-[#a00000]">
            <div className="relative min-w-0 flex-1">
              <MacdChart />
              <div className="absolute top-0 left-0 flex gap-[7px] leading-6">
                <span className="text-[#c8c800]">0.12</span>
                <span className="text-[#d200d2]">MACD: 0.03</span>
              </div>
            </div>
            <div className="flex w-[76px] border-l-2 border-[#a00000]">
              <svg className="h-full w-2" viewBox="0 1035 8 262" preserveAspectRatio="none" stroke="#a00000">
                <path d="M0 1069H8M0 1136H8M0 1204H8M0 1103H3M0 1170H3" strokeWidth="2" />
              </svg>
              <div className="flex h-[182px] flex-1 flex-col justify-between pt-[23px] pr-2 text-right leading-6 text-[#e62d2d]">
                <span>1.00</span>
                <span>0.50</span>
                <span>0.00</span>
              </div>
            </div>
          </section>

          <section className="flex min-h-[186px] flex-1">
            <div className="relative min-w-0 flex-1">
              <KdjChart />
              <span className="absolute top-0 left-[3px] leading-6 text-[#d200d2]">67.08</span>
            </div>
            <div className="w-[76px] border-t-2 border-l-2 border-[#c80000] pt-[40px] pr-2 text-right leading-6 text-[#e62d2d]">
              <p>100.00</p>
              <p className="mt-3.5">80.00</p>
              <p className="mt-8">50.00</p>
            </div>
          </section>
        </div>

        <div className="flex w-[465px] shrink-0 flex-col border-l-2 border-[#a00000]">
          <BookTable rows={ASKS} mark="up" />
          <div className="flex h-[2px] shrink-0">
            <div className="flex-1 bg-[#b4781e]" />
            <div className="w-[42px] bg-[#2878c8]" />
          </div>
          <BookTable rows={BIDS} mark="down" />
          <table className="w-full shrink-0 table-fixed border-y-2 border-[#a00000] text-[21px] leading-none">
            <colgroup>
              <col className="w-[100px]" />
              <col className="w-[123px]" />
              <col className="w-[100px]" />
              <col />
            </colgroup>
            <tbody>
              {[
                ["卖均", "8.19", "总卖", "182380", RED],
                ["买均", "7.36", "总买", "54853", GREEN],
              ].map(([label, avg, totalLabel, total, color]) => (
                <tr key={label} className="h-[27px]">
                  <th scope="row" className="p-0 pl-[2px] text-left text-2xl leading-none font-light">
                    {label}
                  </th>
                  <td className={`p-0 text-right font-bold ${color}`}>{avg}</td>
                  <th scope="row" className="p-0 pl-3 text-left text-2xl leading-none font-light">
                    {totalLabel}
                  </th>
                  <td className="p-0 pr-[6px] text-right font-bold text-[#c0c000]">{total}</td>
                </tr>
              ))}
            </tbody>
          </table>
          <div className="flex h-8 shrink-0 items-center border-b-2 border-[#a00000] pl-8 text-[21px] text-[#ff3232]">
            <button type="button" className="w-[146px] text-left font-light">
              逐笔分析
            </button>
            <svg width="17" height="18" viewBox="0 0 17 18" fill="#80702a" aria-hidden="true">
              <path d="M6 0H13L10 5H17L5 18L7 10H0Z" />
            </svg>
            <button type="button" className="ml-[76px] font-light">
              查看千档盘口
            </button>
          </div>
          <OrderQueue label="卖一" price="7.51" average="11.1" count="7" lots={["34", "7", "1", "20", "2", "7", "7"]} />
          <div className="mt-[322px] border-t-2 border-[#a00000]">
            <OrderQueue
              label="买一"
              price="7.50"
              average="26.7"
              count="15"
              lots={["164", "40", "5", "30", "1", "48", "10", "4", "49", "1", "2", "6", "20", "10", "10"]}
            />
          </div>
        </div>

        <aside className="w-[252px] shrink-0 overflow-hidden border-l-2 border-[#a00000]">
          <h2 className="flex h-10 items-center gap-[6px] border-b-2 border-[#a00000] pl-[50px] text-2xl leading-none font-light whitespace-nowrap text-[#00c8dc]">
            <span className="text-[21px] font-bold text-[#ffff00]">002279</span>
            久其软件
          </h2>
          <div className="pb-[2px]">
            <QuoteTable rows={QUOTES} height="h-[228px]" />
          </div>
          <div className="border-t-2 border-[#a00000] pb-[3px]">
            <QuoteTable rows={FUNDAMENTALS} height="h-[172px]" />
          </div>
          <p className="flex h-[31px] items-center border-y-2 border-[#a00000] text-2xl leading-none font-light whitespace-nowrap">
            交易状态<span className="text-[21px] font-bold">:&nbsp;</span>盘中休市
            <span className="text-[21px] font-bold">&nbsp;11:30</span>
          </p>
          <div className="h-[63px] border-b-2 border-[#a00000] pl-[3px] text-2xl leading-none font-light whitespace-nowrap">
            <div className="flex h-[29px] items-center">
              <span className="w-[101px] shrink-0">主力净额</span>
              <svg
                className="shrink-0"
                width="18"
                height="18"
                viewBox="0 0 18 18"
                fill="#303030"
                stroke="#909090"
                aria-hidden="true"
              >
                <rect x="1" y="1" width="16" height="16" rx="3" />
                <path d="M4 5H14M4 8H14M4 11H14M4 14H14" />
              </svg>
              <span className="ml-[18px] h-[11px] w-[71px] shrink-0 bg-[#00e600]" />
              <span className="ml-[33px] text-[21px] text-[#00e600]">-</span>
            </div>
            <div className="flex h-[29px] items-center">
              <span className="w-[137px] shrink-0">
                <span className="text-[21px] font-bold">5</span>日主力净额
              </span>
              <span className="h-[11px] w-[5px] shrink-0 bg-[#00e600]" />
              <span className="ml-[93px] text-[21px] text-[#00e600]">-4</span>
            </div>
          </div>
          <table className="w-[188px] table-fixed border-collapse text-[21px] leading-none font-bold">
            <tbody>
              {TICKS.map(([time, price], i) => (
                <tr key={i} className="h-[27px]">
                  <td className="p-0 pl-[2px]">{time}</td>
                  <td className="p-0 text-right text-[#00e600]">{price}</td>
                </tr>
              ))}
            </tbody>
          </table>
        </aside>
      </main>

      <Annotations />
    </div>
  );
}
